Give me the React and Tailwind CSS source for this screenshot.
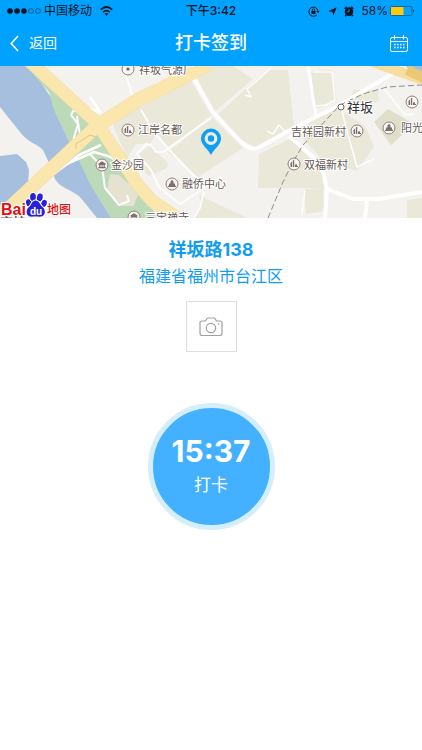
import React from "react";

const PLACES = [
  { name: "祥坂气源厂", x: 139, y: 8, iconX: 128, iconY: 3, kind: "dot" },
  { name: "江岸名都", x: 138, y: 68, iconX: 128, iconY: 64, kind: "building" },
  { name: "金沙园", x: 111, y: 103, iconX: 102, iconY: 99, kind: "temple" },
  { name: "融侨中心", x: 182, y: 122, iconX: 172, iconY: 118, kind: "tower" },
  { name: "三宝禅寺", x: 145, y: 156, iconX: 134, iconY: 151, kind: "temple" },
  { name: "吉祥园新村", x: 291, y: 70, iconX: 357, iconY: 65, kind: "building" },
  { name: "双福新村", x: 304, y: 103, iconX: 294, iconY: 98, kind: "building" },
  { name: "阳光城", x: 401, y: 66, iconX: 389, iconY: 62, kind: "tower" },
  { name: "", x: 0, y: 0, iconX: 412, iconY: 36, kind: "building" },
];

function PlaceIcon({ x, y, kind }) {
  return (
    <g transform={`translate(${x} ${y})`}>
      <circle r="6" fill="#f7f4f2" stroke="#8d807c" strokeWidth="1" />
      {kind === "dot" && <circle r="1.6" fill="#6b5d5a" />}
      {kind === "building" && (
        <path
          d="M-3.500 3V-1L-2-2.500V3ZM-1.200 3V-3.500L.2-4.200V3ZM1 3V.5L3 .2V2H4V3Z"
          fill="#7d706c"
        />
      )}
      {kind === "tower" && (
        <path
          d="M-4 3V1.800H-3V-.6H-1.500V-2.600L0-4.200 1.500-2.600V-.6H3V1.800H4V3Z"
          fill="#7d706c"
        />
      )}
      {kind === "temple" && (
        <path
          d="M-3.8-1.2 0-3.8 3.8-1.2V-.4H2.8V2H3.6V3.2H-3.6V2H-2.8V-.4H-3.8ZM-1.5 0V2H-.4V0ZM.5 0V2H1.6V0Z"
          fill="#7d706c"
          fillRule="evenodd"
        />
      )}
    </g>
  );
}

function MapView() {
  return (
    <svg
      viewBox="0 0 422 152"
      preserveAspectRatio="xMidYMid slice"
      className="block h-[152px] w-full bg-[#f3f2ef]"
      role="img"
      aria-label="地图"
    >
      {/* river and its banks */}
      <path d="M0 0H30L60 45 78 90 115 152H0Z" fill="#a7bfdf" />
      <path
        d="M0 41 20 66C28 77 38 78 43 84L50 99 55 113C60 122 72 124 80 131L97 152H0V139L10 136 28 118 29 104 26 96 17 88 0 90Z"
        fill="#f3f2ef"
      />
      <path
        d="M26 0H35L92 58 108 80 138 120 150 138 156 152H111L91 120 77 90 70 78 54 44 49 26Z"
        fill="#bddab8"
      />

      {/* city blocks */}
      <g fill="#eae8d8">
        <path d="M140 41 190 13 211 49 168 83Z" />
        <path d="M212 51 243 82 198 111 168 86Z" />
        <path d="M195 8 210 0H233L253 13 214 46Z" />
        <path d="M216 50 256 14 268 4 288 4 294 60 270 74 255 81 240 73Z" />
        <path d="M259 88 290 73 311 93 322 108 325 122 258 122Z" />
        <path d="M113 60 118 51 138 40 158 65 150 78 136 78 127 92Z" />
        <path d="M137 89 150 80 168 97 167 102 149 110 141 102Z" />
        <path d="M110 108 119 109 137 126 134 140 122 140 107 124Z" fill="#e5e3d0" />
        <path d="M199 129 247 152H194L202 140Z" />
        <path d="M311 5 332 4 337 34 326 40 315 42Z" />
        <path d="M353 24 378 24 379 35 347 48 348 40Z" />
        <path d="M315 50 338 43 365 60 374 81 357 105 324 96 300 69Z" />
        <path d="M304 123 323 122 324 145 306 148Z" />
        <path d="M374 56 388 43 414 58 391 79Z" fill="#dfdfcb" />
        <path d="M407 134 422 132V152H407Z" />
        <path d="M130 110 138 129 133 141 124 133Z" fill="#e5e3d0" />
        <path d="M133 140 142 136 153 144 158 152H136Z" fill="#bddab8" />
      </g>
      <path d="M404-2H422V11L411 5Z" fill="#a7bfdf" />

      {/* minor streets */}
      <g fill="none" stroke="#fdfdfc" strokeWidth="2" strokeLinejoin="round">
        <path d="M122 0 128 15 133 32" />
        <path d="M141 44 154 66 174 89 205 121" />
        <path d="M211 52 163 86 156 86 151 79 146 78 137 88 151 104 159 121 180 138 222 110" />
        <path d="M204 125 200 142 194 152" strokeWidth="1.5" />
        <path d="M90 88 102 101 105 122 119 139 129 135 127 129" />
        <path d="M46 114 79 89 101 79" strokeWidth="2.5" />
        <path d="M55 103 94 86 111 91 125 103" strokeWidth="2.5" />
        <path d="M73 75 78 58 71 49 73 45 82 45 86 54 95 54" />
        <path d="M69 38 101 46" strokeWidth="3" />
        <path d="M82 79 79 63 77 50" />
        <path d="M101 47 90 31" strokeWidth="3" />
        <path d="M245 29 251 31 247 23 260 12 271 2" strokeWidth="1.5" />
        <path d="M267 65 273 68 279 59 286 66 293 61" strokeWidth="1.5" />
        <path d="M313 6H332L335 34 326 39 316 40" strokeWidth="1.5" />
        <path d="M341 41 347 65 357 101 374 93" strokeWidth="1.5" />
        <path d="M383 21 393 34 405 49 414 48" strokeWidth="1.5" />
        <path d="M302 149 305 124" strokeWidth="1.5" />
      </g>

      {/* main streets */}
      <g fill="none" stroke="#ffffff" strokeWidth="4" strokeLinejoin="round">
        <path d="M192 9 213 46 240 75Q250 85 258 82L290 64 340 39 392 8" />
        <path d="M289 70 313 91 323 106 327 123 353 133 378 133 422 126" />
        <path d="M327 123 325 152M367 134 365 152" />
        <path d="M308-2 312 26 316 50" strokeWidth="3" />
      </g>

      {/* highways */}
      <g fill="none" strokeLinejoin="round">
        <path d="M5 146 97 60 141 32 163 22 208-2" stroke="#efdfa8" strokeWidth="14" />
        <path d="M28-6 97 57 112 80 138 119 152 135 182 155" stroke="#efdfa8" strokeWidth="13" />
        <path d="M5 146 97 60 141 32 163 22 208-2" stroke="#fbe7ae" strokeWidth="13" />
        <path d="M28-6 97 57 112 80 138 119 152 135 182 155" stroke="#fbe7ae" strokeWidth="12" />
        <path d="M76 83V78L90 69 96 71" stroke="#dfc78d" strokeWidth="1" />
        <path d="M370-5 406 8 426 15" stroke="#f6dea0" strokeWidth="10" />
        <path d="M407 4 424 12" stroke="#eac974" strokeWidth="10" />
      </g>

      {/* railway */}
      <path
        d="M268 152 283 116 293 96 303 79 340 39 363 28 387 21 422 19"
        fill="none"
        stroke="#8f8d8b"
        strokeWidth="1"
        strokeDasharray="6 3"
      />
      <circle cx="341" cy="41" r="3" fill="#fff" stroke="#666" strokeWidth="1" />

      <g
        fill="#655a57"
        stroke="#fff"
        strokeWidth="2"
        paintOrder="stroke"
        className="font-['Noto_Sans_CJK_SC',sans-serif] text-[11px]"
      >
        {PLACES.map((p) => (
          <text key={p.iconX} x={p.x} y={p.y}>
            {p.name}
          </text>
        ))}
        <text x="347" y="46" fill="#333" className="text-[13px]">
          祥坂
        </text>
        <text x="0" y="161" className="text-[13px] font-bold">
          京榕
        </text>
      </g>
      {PLACES.map((p) => (
        <PlaceIcon key={p.iconX} x={p.iconX} y={p.iconY} kind={p.kind} />
      ))}

      {/* current position */}
      <path
        d="M211 89C208 83 201 79 201 72.500A10 10 0 0 1 221 72.500C221 79 214 83 211 89Z"
        fill="#0b9ff5"
      />
      <circle cx="211" cy="72.500" r="4.800" fill="none" stroke="#eeecdf" strokeWidth="3.200" />

      {/* map provider logo */}
      <g stroke="#fff" strokeWidth="2" paintOrder="stroke" strokeLinejoin="round">
        <text x="1" y="149" fill="#de1015" className="font-['Liberation_Sans',sans-serif] text-[16px] font-bold">
          Bai
        </text>
        <g fill="#2722d8">
          <ellipse cx="29" cy="137" rx="2.900" ry="3.800" transform="rotate(-15 29 137)" />
          <ellipse cx="33" cy="131" rx="2.900" ry="4" />
          <ellipse cx="39.800" cy="131.500" rx="2.900" ry="4" transform="rotate(12 39.800 131.500)" />
          <ellipse cx="44" cy="137.500" rx="2.700" ry="3.700" transform="rotate(18 44 137.500)" />
          <path d="M35.500 134.500C39 134.500 40 138.500 42 140.500 44.500 142.500 45.500 145 44.500 148 43 151.500 39 150.500 35.500 150.500 32 150.500 28.500 151.500 27 148 26 145 27 142.500 29.500 140.500 31.500 138.500 32 134.500 35.500 134.500Z" />
        </g>
        <text x="30" y="149" fill="#fff" stroke="none" className="font-['Liberation_Sans',sans-serif] text-[10px] font-bold">
          du
        </text>
        <text x="47" y="148" fill="#de1015" className="font-['Noto_Sans_CJK_SC',sans-serif] text-[12px] font-medium">
          地图
        </text>
      </g>
    </svg>
  );
}

function StatusBar() {
  return (
    <div className="grid h-[22px] grid-cols-[1fr_auto_1fr] items-center px-[7px] text-xs text-[#06131f]">
      <div className="flex items-center">
        <svg width="35" height="8" viewBox="0 0 35 8" aria-hidden="true">
          <circle cx="3" cy="4" r="2.800" fill="#06131f" />
          <circle cx="10" cy="4" r="2.800" fill="#06131f" />
          <circle cx="17" cy="4" r="2.800" fill="#06131f" />
          <circle cx="24" cy="4" r="2.400" fill="none" stroke="#06476f" strokeWidth="0.800" />
          <circle cx="31" cy="4" r="2.400" fill="none" stroke="#06476f" strokeWidth="0.800" />
        </svg>
        <span className="ml-0.5">中国移动</span>
        <svg width="13" height="10" viewBox="0 0 13 10" className="ml-2" aria-hidden="true">
          <g fill="none" stroke="#06131f" strokeWidth="1.700">
            <path d="M.8 3.700Q6.500-1.700 12.200 3.700" />
            <path d="M3 6.200Q6.500 3 10 6.200" />
          </g>
          <path d="M4.600 7.700Q6.500 6.200 8.400 7.700L6.500 9.700Z" fill="#06131f" />
        </svg>
      </div>
      <span className="font-medium">下午3:42</span>
      <div className="flex items-center justify-end">
        <svg width="12" height="11" viewBox="0 0 12 11" fill="none" stroke="#06131f" aria-hidden="true">
          <path d="M8.800 8.900A4.600 4.600 0 1 1 10 5" />
          <path d="M8.400 5H11.600L10 7.200Z" fill="#06131f" stroke="none" />
          <path d="M3.500 5H7.500V8H3.500Z" fill="#06131f" stroke="none" />
          <path d="M4.300 5.200V4A1.200 1.200 0 0 1 6.700 4V5.200" strokeWidth="0.900" />
        </svg>
        <svg width="9" height="9" viewBox="0 0 9 9" className="ml-2" aria-hidden="true">
          <path d="M8.700.3 5.300 8.700 4.400 4.800.3 4.200Z" fill="#06131f" />
        </svg>
        <svg width="10" height="11" viewBox="0 0 10 11" className="ml-[7px]" aria-hidden="true">
          <circle cx="5" cy="5.600" r="4.300" fill="#06131f" />
          <path d="M.6 2.800 2.800.8M9.400 2.800 7.200.8M2.200 9 1.200 10.300M7.800 9 8.800 10.300" stroke="#06131f" strokeWidth="1.400" />
          <path d="M5 3.200V5.800H3.200" fill="none" stroke="#00a2ff" strokeWidth="0.900" />
        </svg>
        <span className="ml-[7px]">58%</span>
        <svg width="25" height="10" viewBox="0 0 25 10" className="ml-0.5" aria-hidden="true">
          <rect x="0.500" y="0.500" width="21.500" height="9" rx="1.200" fill="none" stroke="#17699c" />
          <rect x="1" y="1" width="12.500" height="8" fill="#fdca0c" />
          <path d="M23 3.200Q24.600 5 23 6.800Z" fill="#06131f" />
        </svg>
      </div>
    </div>
  );
}

function NavBar() {
  return (
    <nav className="grid h-11 grid-cols-[1fr_auto_1fr] items-center px-2.5 pb-0.5 text-white">
      <button type="button" className="flex items-center justify-self-start text-sm">
        <svg width="9" height="17" viewBox="0 0 9 17" fill="none" stroke="currentColor" strokeWidth="1.600" aria-hidden="true">
          <path d="M8 1 1.200 8.500 8 16" />
        </svg>
        <span className="ml-2.5">返回</span>
      </button>
      <h1 className="text-lg font-medium">打卡签到</h1>
      <button type="button" aria-label="日历" className="mr-1 justify-self-end">
        <svg width="18" height="17" viewBox="0 0 18 17" fill="none" stroke="currentColor" strokeWidth="1" aria-hidden="true">
          <rect x="0.500" y="2.500" width="17" height="14" rx="1.500" />
          <path d="M.5 6.500H17.500M4.500 0V4.500M13.500 0V4.500" />
          <path d="M4 9.500H14.500M4 12.500H14.500" strokeWidth="1.500" strokeDasharray="1.500 1.500" />
        </svg>
      </button>
    </nav>
  );
}

export default function App() {
  return (
    <div className="min-h-screen bg-white font-['Inter','Noto_Sans_CJK_SC',sans-serif]">
      <header className="bg-[#00a2ff]">
        <StatusBar />
        <NavBar />
      </header>
      <MapView />

      <main className="flex flex-col items-center pt-5 text-[#129ef0]">
        <h2 className="text-lg leading-6 font-bold">祥坂路138</h2>
        <p className="mt-1 text-base leading-5">福建省福州市台江区</p>

        <button
          type="button"
          aria-label="拍照"
          className="mt-[15px] flex size-[51px] items-center justify-center border border-[#dedede]"
        >
          <svg width="24" height="20" viewBox="0 0 24 20" fill="none" stroke="#a0a0a0" strokeWidth="1.200" aria-hidden="true">
            <path d="M3 4H6.500L8 1.500Q8.400 1 9 1H15Q15.600 1 16 1.500L17.500 4H21Q23 4 23 6V16Q23 18.500 21 18.500H3Q1 18.500 1 16V6Q1 4 3 4Z" />
            <circle cx="12" cy="11" r="4.700" />
            <circle cx="19.500" cy="7" r="0.800" fill="#a0a0a0" stroke="none" />
          </svg>
        </button>

        <button
          type="button"
          className="mt-[51px] flex size-[127px] flex-col items-center justify-center rounded-full border-[5px] border-[#d5eefe] bg-[#43b1ff] pb-1 text-white"
        >
          <time className="text-[30px] leading-9 font-bold">15:37</time>
          <span className="mt-1 text-[17px] leading-6">打卡</span>
        </button>
      </main>
    </div>
  );
}
